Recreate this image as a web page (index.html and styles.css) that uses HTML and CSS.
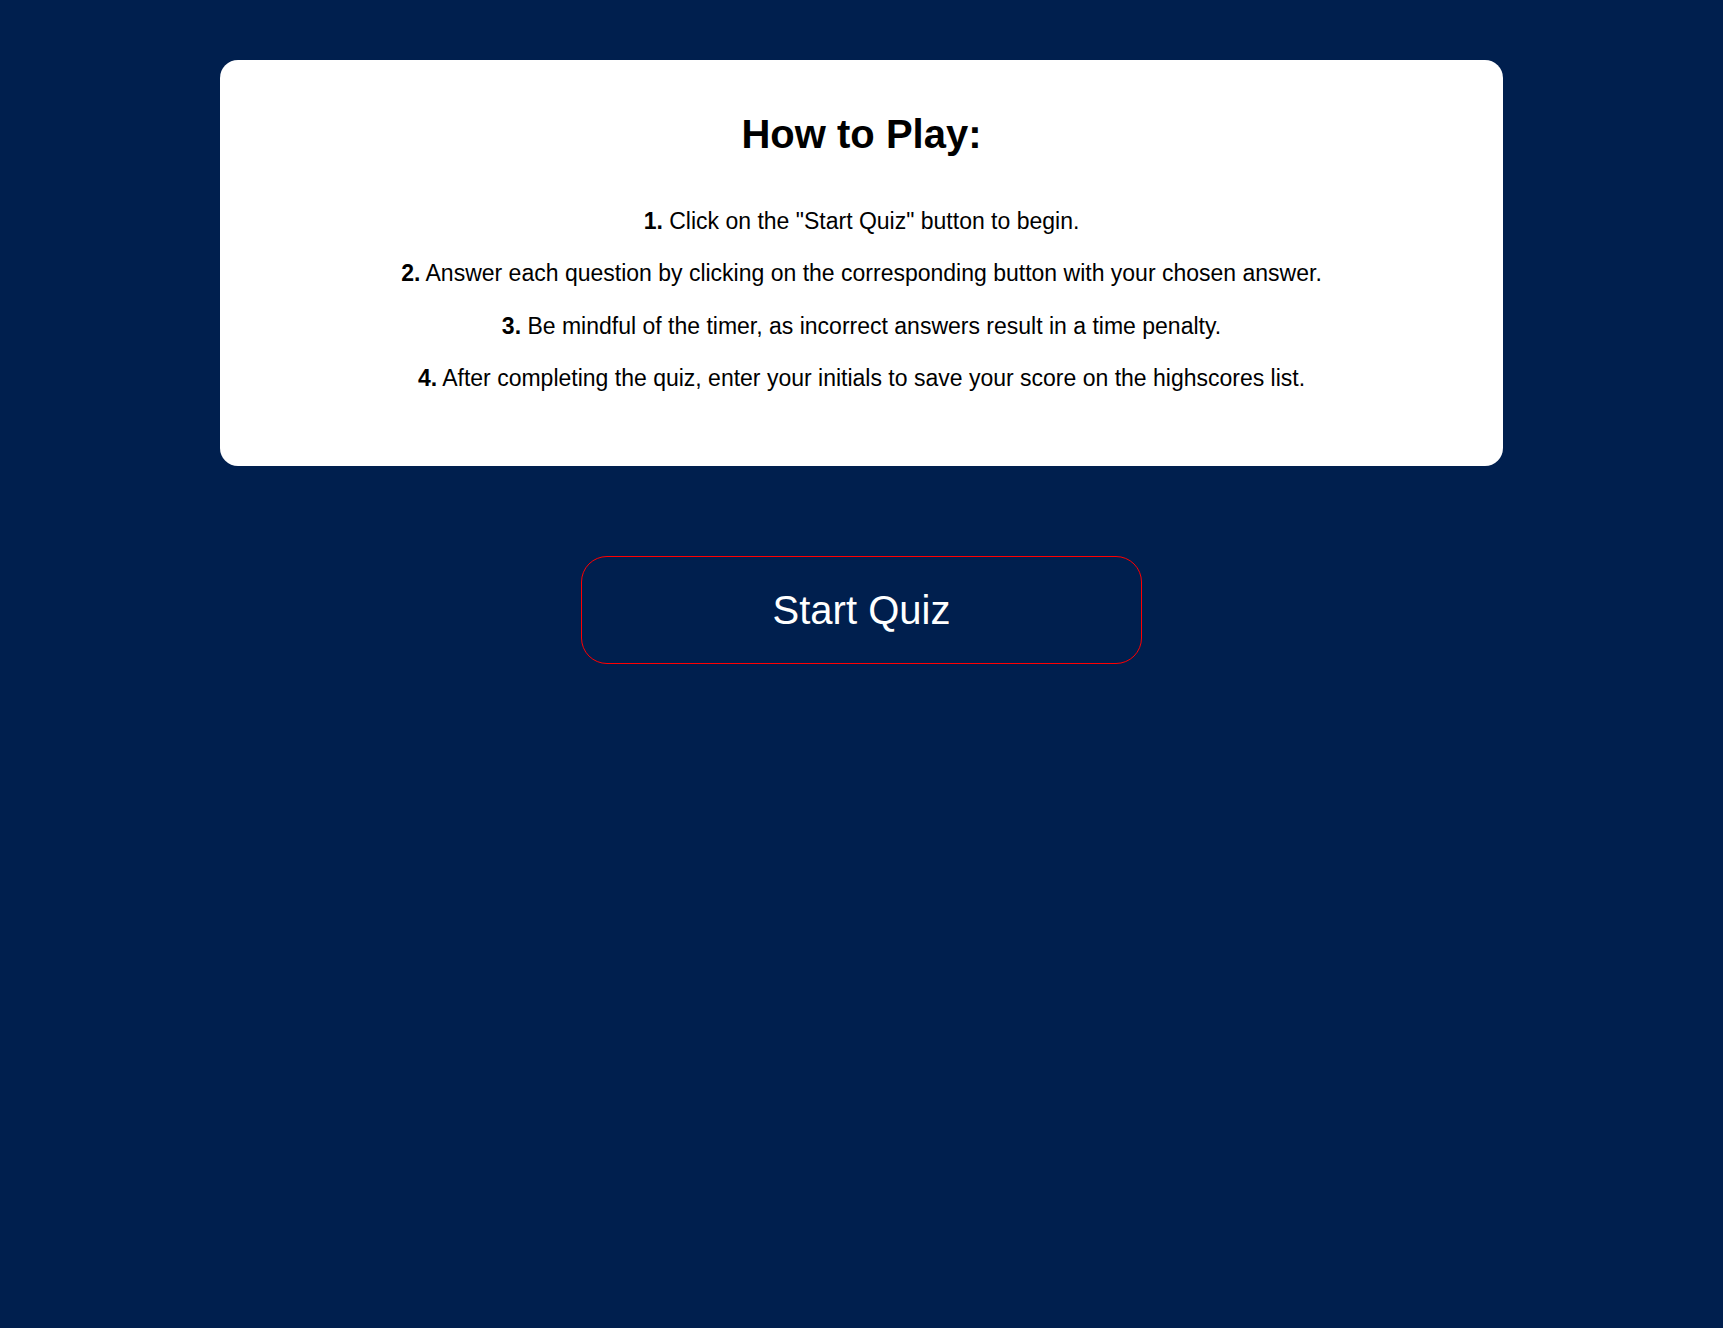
FILE: index.html
```html
<!DOCTYPE html>
<html lang="en">
<head>
<meta charset="utf-8">
<title>Code Quiz</title>
<link rel="stylesheet" href="styles.css">
</head>
<body>
<main class="page">
  <section class="card">
    <h1 class="card-title">How to Play:</h1>
    <div class="steps">
      <p class="step"><strong>1.</strong> Click on the "Start Quiz" button to begin.</p>
      <p class="step"><strong>2.</strong> Answer each question by clicking on the corresponding button with your chosen answer.</p>
      <p class="step"><strong>3.</strong> Be mindful of the timer, as incorrect answers result in a time penalty.</p>
      <p class="step"><strong>4.</strong> After completing the quiz, enter your initials to save your score on the highscores list.</p>
    </div>
  </section>
  <button class="start-btn" type="button">Start Quiz</button>
</main>
</body>
</html>
```
FILE: styles.css
```css
html, body {
  margin: 0;
  padding: 0;
  background: #001f4e;
  min-height: 100%;
}
body {
  font-family: "Liberation Sans", Arial, Helvetica, sans-serif;
  min-height: 1328px;
}
.page {
  display: flex;
  flex-direction: column;
  align-items: center;
  padding-top: 60px;
}
.card {
  width: 1283px;
  box-sizing: border-box;
  background: #ffffff;
  border-radius: 18px;
  padding: 51px 40px 75px;
  text-align: center;
  color: #000;
}
.card-title {
  margin: 0;
  font-size: 40px;
  line-height: 46px;
  font-weight: bold;
}
.steps {
  display: flex;
  flex-direction: column;
  gap: 26.4px;
  margin-top: 51px;
}
.step {
  margin: 0;
  font-size: 23px;
  line-height: 26px;
}
.start-btn {
  margin-top: 90px;
  width: 561px;
  height: 108px;
  box-sizing: border-box;
  background: #001f4e;
  color: #ffffff;
  border: 1px solid #ff0000;
  border-radius: 26px;
  font-family: "Liberation Sans", Arial, Helvetica, sans-serif;
  font-size: 40px;
  line-height: 46px;
  padding: 0;
  cursor: pointer;
}
```
